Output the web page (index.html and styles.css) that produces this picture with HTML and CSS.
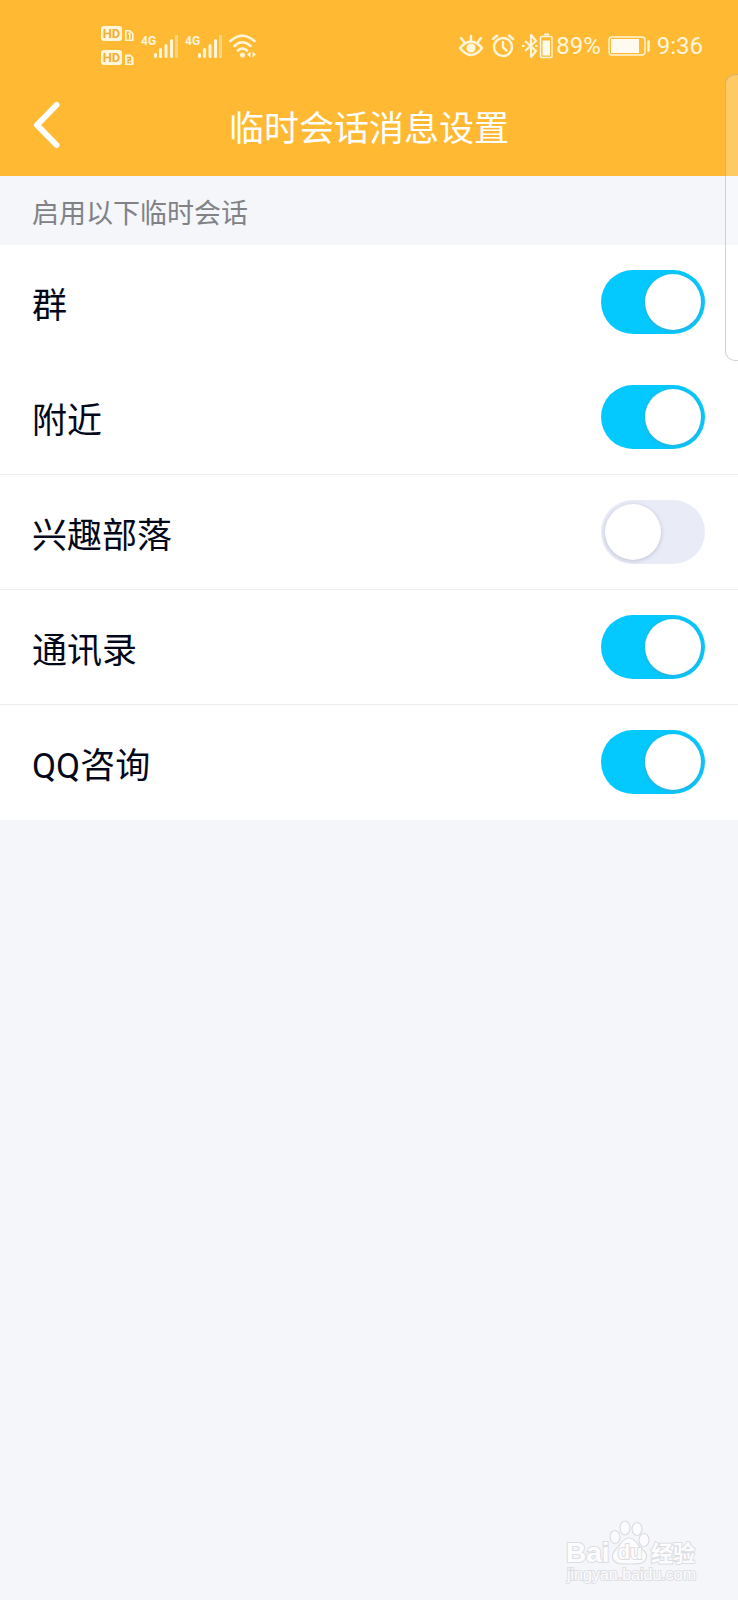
FILE: index.html
```html
<!DOCTYPE html>
<html lang="zh-CN">
<head>
<meta charset="utf-8">
<meta name="viewport" content="width=device-width, initial-scale=1">
<title>临时会话消息设置</title>
<link rel="stylesheet" href="styles.css">
</head>
<body>
<div class="screen">
  <header class="header">
    <div class="status">
      <div class="status-group status-left">
        <svg class="hd" width="34" height="42" viewBox="0 0 34 42" aria-label="HD 1 HD 2">
          <rect x="0" y="1" width="21" height="15" rx="3" fill="#fff6dc"/>
          <text class="hd-text" x="10.500" y="13" text-anchor="middle">HD</text>
          <path d="M24.800 5.800h4l3 3v6.500h-7z" fill="#ffb933" stroke="#fff6dc" stroke-width="1.600"/>
          <path d="M27.300 9l1.500-.8v6" fill="none" stroke="#fff6dc" stroke-width="1.600"/>
          <rect x="0" y="25" width="21" height="15" rx="3" fill="#fff6dc"/>
          <text class="hd-text" x="10.500" y="37" text-anchor="middle">HD</text>
          <path d="M24 29.500h5.500l3 3v7.500h-8.500z" fill="#fff6dc"/>
          <path d="M26 32.500h3.500v2.500h-2.500v2.800h3.500" fill="none" stroke="#f0a830" stroke-width="1.300"/>
        </svg>
        <svg class="signal" width="38" height="26" viewBox="0 0 38 26" aria-label="4G">
          <text class="net" x="0" y="12">4G</text>
          <path d="M14.500 23.500v-2M19.500 23.500v-7M25 23.500v-11M30.500 23.500v-16" stroke="#fff6dc" stroke-width="3" stroke-linecap="round"/>
          <path d="M35.500 25V2" stroke="#ffd482" stroke-width="3"/>
        </svg>
        <svg class="signal" width="38" height="26" viewBox="0 0 38 26" aria-label="4G">
          <text class="net" x="0" y="12">4G</text>
          <path d="M14.500 23.500v-2M19.500 23.500v-7M25 23.500v-11M30.500 23.500v-16" stroke="#fff6dc" stroke-width="3" stroke-linecap="round"/>
          <path d="M35.500 25V2" stroke="#ffd482" stroke-width="3"/>
        </svg>
        <svg width="28" height="26" viewBox="0 0 28 26" aria-hidden="true">
          <path d="M1.500 8Q13-2.500 25.500 8M5.500 13Q13 5.500 21.500 13M9 17.500Q13 13.500 18 17.500" fill="none" stroke="#fff6dc" stroke-width="2.600" stroke-linecap="round"/>
          <circle cx="13.500" cy="22" r="2.500" fill="#fff6dc"/>
          <path d="M21.500 18.500v6l-3.500-3zM23.500 18.500v6l3.500-3z" fill="#fff6dc"/>
        </svg>
      </div>
      <div class="status-group status-right">
        <svg width="26" height="24" viewBox="0 0 26 24" aria-hidden="true">
          <path d="M2 14Q13 1 24 14Q13 28 2 14z" fill="none" stroke="#fff6dc" stroke-width="2.600" stroke-linejoin="round"/>
          <circle cx="13" cy="14" r="4.500" fill="#fff6dc"/>
          <path d="M13 6V2M6 8L3 4M20 8l3-4" stroke="#fff6dc" stroke-width="2.400" stroke-linecap="round"/>
        </svg>
        <svg width="24" height="24" viewBox="0 0 24 24" aria-hidden="true">
          <circle cx="12" cy="13" r="9" fill="none" stroke="#fff6dc" stroke-width="2.400"/>
          <path d="M12 8v5.500l3.500 3M2 5l4-3.500M22 5l-4-3.500" fill="none" stroke="#fff6dc" stroke-width="2.400" stroke-linecap="round"/>
        </svg>
        <svg class="bt" width="31" height="26" viewBox="0 0 31 26" aria-hidden="true">
          <path d="M3 8l11 10-5 6V2l5 6L3 18" fill="none" stroke="#fff6dc" stroke-width="2.200" stroke-linejoin="round"/>
          <path d="M0 13h2.500M13 13h2.500" stroke="#fff6dc" stroke-width="2.200"/>
          <rect x="18.500" y="3.500" width="11.500" height="21" rx="1" fill="none" stroke="#fff6dc" stroke-width="1.400"/>
          <path d="M22 1.500h5" stroke="#fff6dc" stroke-width="2"/>
          <path d="M20.500 7.500h7.500V22.500h-7.500z" fill="#fffaf0"/>
        </svg>
        <span>89%</span>
        <svg class="battery" width="42" height="20" viewBox="0 0 42 20" aria-hidden="true">
          <rect x="1" y="1" width="36" height="18" rx="3" fill="none" stroke="#fff6dc" stroke-width="1.400"/>
          <path d="M3 3h28v14H3z" fill="#fffaf0"/>
          <path d="M40.500 5.500v9" stroke="#fff6dc" stroke-width="2.500" stroke-linecap="round"/>
        </svg>
        <time>9:36</time>
      </div>
    </div>
    <div class="navbar">
      <button class="back" type="button" aria-label="返回">
        <svg width="30" height="54" viewBox="0 0 30 54" aria-hidden="true">
          <path d="M24.500 4L5 24L24.500 44" fill="none" stroke="#fff" stroke-width="6" stroke-linecap="round" stroke-linejoin="round"/>
        </svg>
      </button>
      <h1 class="title">临时会话消息设置</h1>
    </div>
  </header>

  <main>
    <h2 class="section">启用以下临时会话</h2>
    <div class="list">
      <label class="row row-plain"><span class="label">群</span><input class="switch" type="checkbox" role="switch" checked></label>
      <label class="row"><span class="label">附近</span><input class="switch" type="checkbox" role="switch" checked></label>
      <label class="row"><span class="label">兴趣部落</span><input class="switch" type="checkbox" role="switch"></label>
      <label class="row"><span class="label">通讯录</span><input class="switch" type="checkbox" role="switch" checked></label>
      <label class="row row-plain"><span class="label">QQ咨询</span><input class="switch" type="checkbox" role="switch" checked></label>
    </div>
  </main>

  <div class="edge-panel"></div>

  <svg class="watermark" width="140" height="72" viewBox="0 0 140 72" aria-label="Baidu 经验">
    <g fill="#fcfcfe" stroke="#dcdde1" stroke-width="1.200">
      <ellipse cx="50" cy="17" rx="5" ry="6.500"/>
      <ellipse cx="60" cy="8" rx="5" ry="7"/>
      <ellipse cx="72" cy="9" rx="5" ry="6.500"/>
      <ellipse cx="79" cy="20" rx="5" ry="6.500"/>
      <path d="M64 18c6 0 8 6 12 10 5 4 7 7 5 11-2 5-8 5-17 5s-14 0-16-5c-2-4 0-7 4-11 4-4 6-10 12-10z"/>
    </g>
    <text class="wm wm-bai" x="1" y="42">Bai</text>
    <text class="wm wm-du" x="65" y="39" text-anchor="middle">du</text>
    <text class="wm wm-cn" x="86" y="41">经验</text>
    <text class="wm wm-url" x="2" y="60">jingyan.baidu.com</text>
  </svg>
</div>
</body>
</html>
```
FILE: styles.css
```css
* {
  box-sizing: border-box;
}

body {
  margin: 0;
  background: #f4f6fa;
  font-family: Roboto, "Noto Sans CJK SC", sans-serif;
  color: #03081a;
}

.screen {
  position: relative;
  min-height: 100vh;
  overflow: hidden;
}

.header {
  background: #ffb933;
  color: #fff;
}

.status {
  display: flex;
  justify-content: space-between;
  align-items: center;
  height: 80px;
  padding: 12px 35px 0 101px;
  color: #fff6dc;
  font-size: 24px;
  line-height: 28px;
}

.status svg {
  display: block;
}

.status-group {
  display: flex;
  align-items: center;
  gap: 6px;
}

.status-right {
  gap: 7px;
}

.bt {
  margin-right: -4px;
}

.hd-text {
  font: 700 13px Roboto, sans-serif;
  fill: #f5ae38;
}

.net {
  font: 700 12px "Liberation Sans Narrow", Roboto, sans-serif;
  fill: #fff6dc;
}

.navbar {
  display: grid;
  grid-template-columns: 60px 1fr 60px;
  align-items: center;
  height: 96px;
  padding: 0 32px;
}

.back {
  padding: 0;
  border: 0;
  background: none;
  text-align: left;
}

.back svg {
  display: block;
}

.title {
  margin: 0;
  padding-top: 4px;
  font-size: 35px;
  font-weight: 400;
  line-height: 48px;
  text-align: center;
  white-space: nowrap;
}

.section {
  margin: 0;
  padding: 18px 32px 11px;
  color: #818286;
  font-size: 27px;
  font-weight: 400;
  line-height: 40px;
}

.list {
  background: #fff;
}

.row {
  display: flex;
  justify-content: space-between;
  align-items: center;
  height: 115px;
  padding: 0 33px 0 32px;
  border-bottom: 1px solid #ebecef;
  font-size: 35px;
  line-height: 48px;
}

.row-plain {
  border-bottom-color: transparent;
}

.label {
  padding-top: 9px;
}

.switch {
  appearance: none;
  display: flex;
  flex: none;
  align-items: center;
  width: 104px;
  height: 64px;
  margin: 0;
  padding: 0 4px;
  border-radius: 32px;
  background: #e9ecf7;
}

.switch::before {
  content: "";
  width: 56px;
  height: 56px;
  border-radius: 50%;
  background: #fff;
  box-shadow: 0 1px 4px rgba(120, 125, 150, 0.4);
}

.switch:checked {
  justify-content: flex-end;
  background: #04c9ff;
}

.edge-panel {
  position: absolute;
  top: 74px;
  right: 0;
  width: 13px;
  height: 287px;
  border: 1px solid rgba(130, 130, 130, 0.35);
  border-right: 0;
  border-radius: 10px 0 0 10px;
  background: rgba(255, 255, 255, 0.25);
}

.watermark {
  position: absolute;
  right: 33px;
  bottom: 8px;
}

.wm {
  fill: #fcfcfe;
  stroke: #dcdde1;
  stroke-width: 2px;
  paint-order: stroke;
}

.wm-bai {
  font: 700 28px "Liberation Sans", sans-serif;
}

.wm-du {
  font: 700 20px "Liberation Sans", sans-serif;
}

.wm-cn {
  font: 700 22px "Noto Sans CJK SC", sans-serif;
}

.wm-url {
  font: 400 16px "Liberation Sans", sans-serif;
  stroke: #dfe0e4;
}
```
